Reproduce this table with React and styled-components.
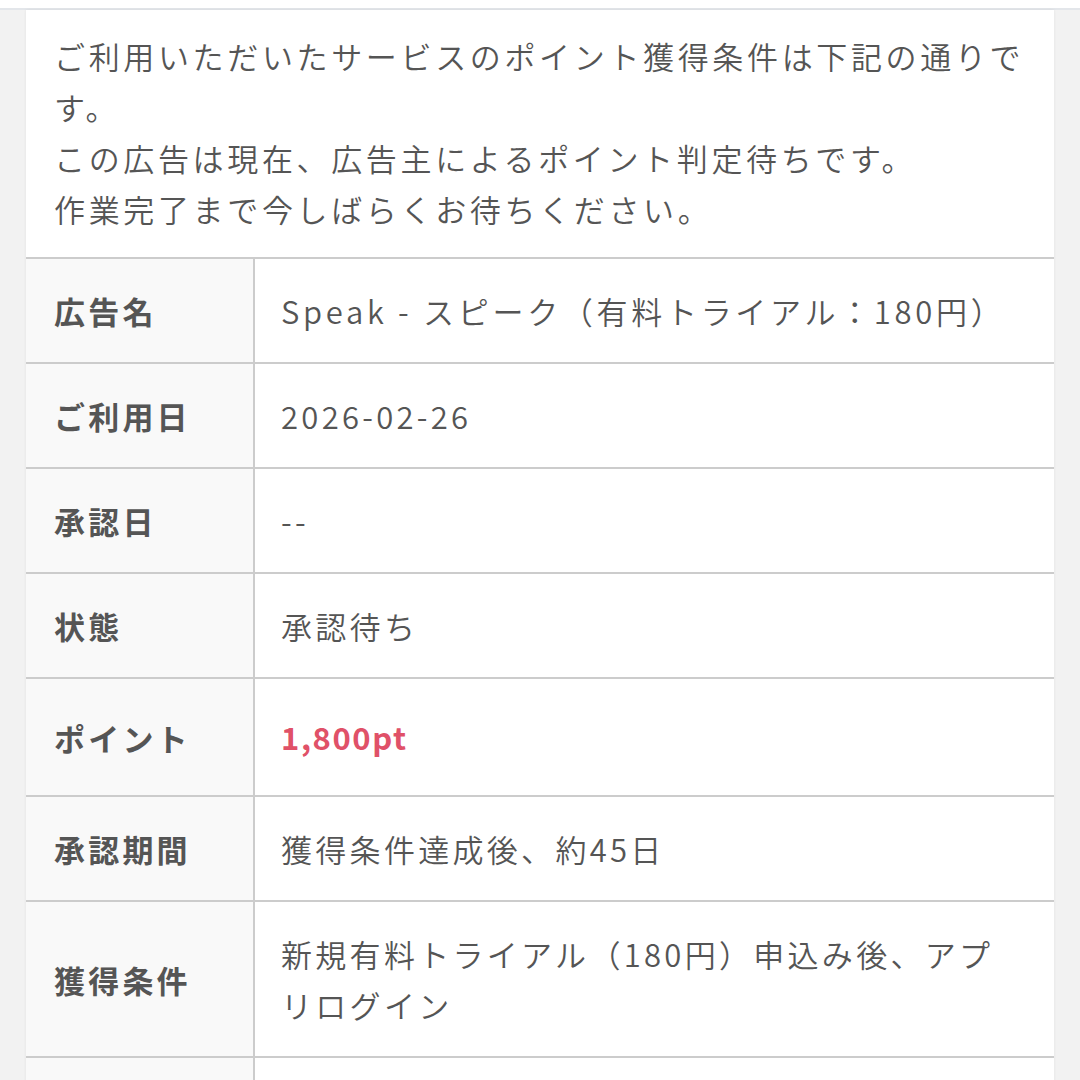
import React from 'react';
import styled, { createGlobalStyle } from 'styled-components';

const GlobalStyle = createGlobalStyle`
  html, body {
    margin: 0;
    padding: 0;
    background: #f2f2f2;
  }
  body {
    font-family: 'Noto Sans CJK JP', 'Noto Sans', sans-serif;
    color: #555;
  }
`;

const Page = styled.div`
  min-height: 1080px;
  background: #f2f2f2;
`;

const TopEdge = styled.div`
  height: 8px;
  background: #fff;
  border-bottom: 2px solid #e3e6ea;
`;

const Card = styled.div`
  margin: 0 26px;
  background: #fff;
  box-shadow: 0 0 3px rgba(0, 0, 0, 0.07);
`;

const Notice = styled.p`
  margin: 0;
  padding: 20px 28px 23px;
  font-size: 31px;
  font-weight: 350;
  line-height: 51px;
  letter-spacing: 3.65px;
  color: #555;
`;

const Table = styled.table`
  width: 100%;
  border-collapse: collapse;
  table-layout: fixed;
`;

const Row = styled.tr`
  border-top: 2px solid #ccc;
`;

const Label = styled.th`
  width: 171px;
  padding: 26px 28px;
  background: #f9f9f9;
  border-right: 2px solid #ccc;
  text-align: left;
  vertical-align: middle;
  font-size: 31px;
  line-height: 51px;
  letter-spacing: 3.2px;
  font-weight: 700;
  color: #555;
`;

const Value = styled.td`
  padding: 26px 28px 26px 26px;
  vertical-align: middle;
  font-size: 31px;
  font-weight: 350;
  line-height: 51px;
  letter-spacing: ${p => p.$wide ? '3.7px' : '3.3px'};
  color: #555;
`;

const Points = styled.span`
  display: inline-block;
  line-height: 64px;
  font-weight: 700;
  color: #e05168;
  letter-spacing: 1.6px;
`;

const rows = [
  { label: '広告名', value: 'Speak - スピーク（有料トライアル：180円）', wide: true },
  { label: 'ご利用日', value: '2026-02-26' },
  { label: '承認日', value: '--' },
  { label: '状態', value: '承認待ち' },
  { label: 'ポイント', points: '1,800pt' },
  { label: '承認期間', value: '獲得条件達成後、約45日' },
  { label: '獲得条件', value: '新規有料トライアル（180円）申込み後、アプリログイン' },
  { label: '', value: '' },
];

export default function App() {
  return (
    <Page>
      <GlobalStyle />
      <TopEdge />
      <Card>
        <Notice>
          ご利用いただいたサービスのポイント獲得条件は下記の通りです。
          <br />
          この広告は現在、広告主によるポイント判定待ちです。
          <br />
          作業完了まで今しばらくお待ちください。
        </Notice>
        <Table>
          <tbody>
            {rows.map((r, i) => (
              <Row key={i}>
                <Label>{r.label || '\u00a0'}</Label>
                <Value $wide={r.wide}>
                  {r.points ? <Points>{r.points}</Points> : r.value || '\u00a0'}
                </Value>
              </Row>
            ))}
          </tbody>
        </Table>
      </Card>
    </Page>
  );
}
